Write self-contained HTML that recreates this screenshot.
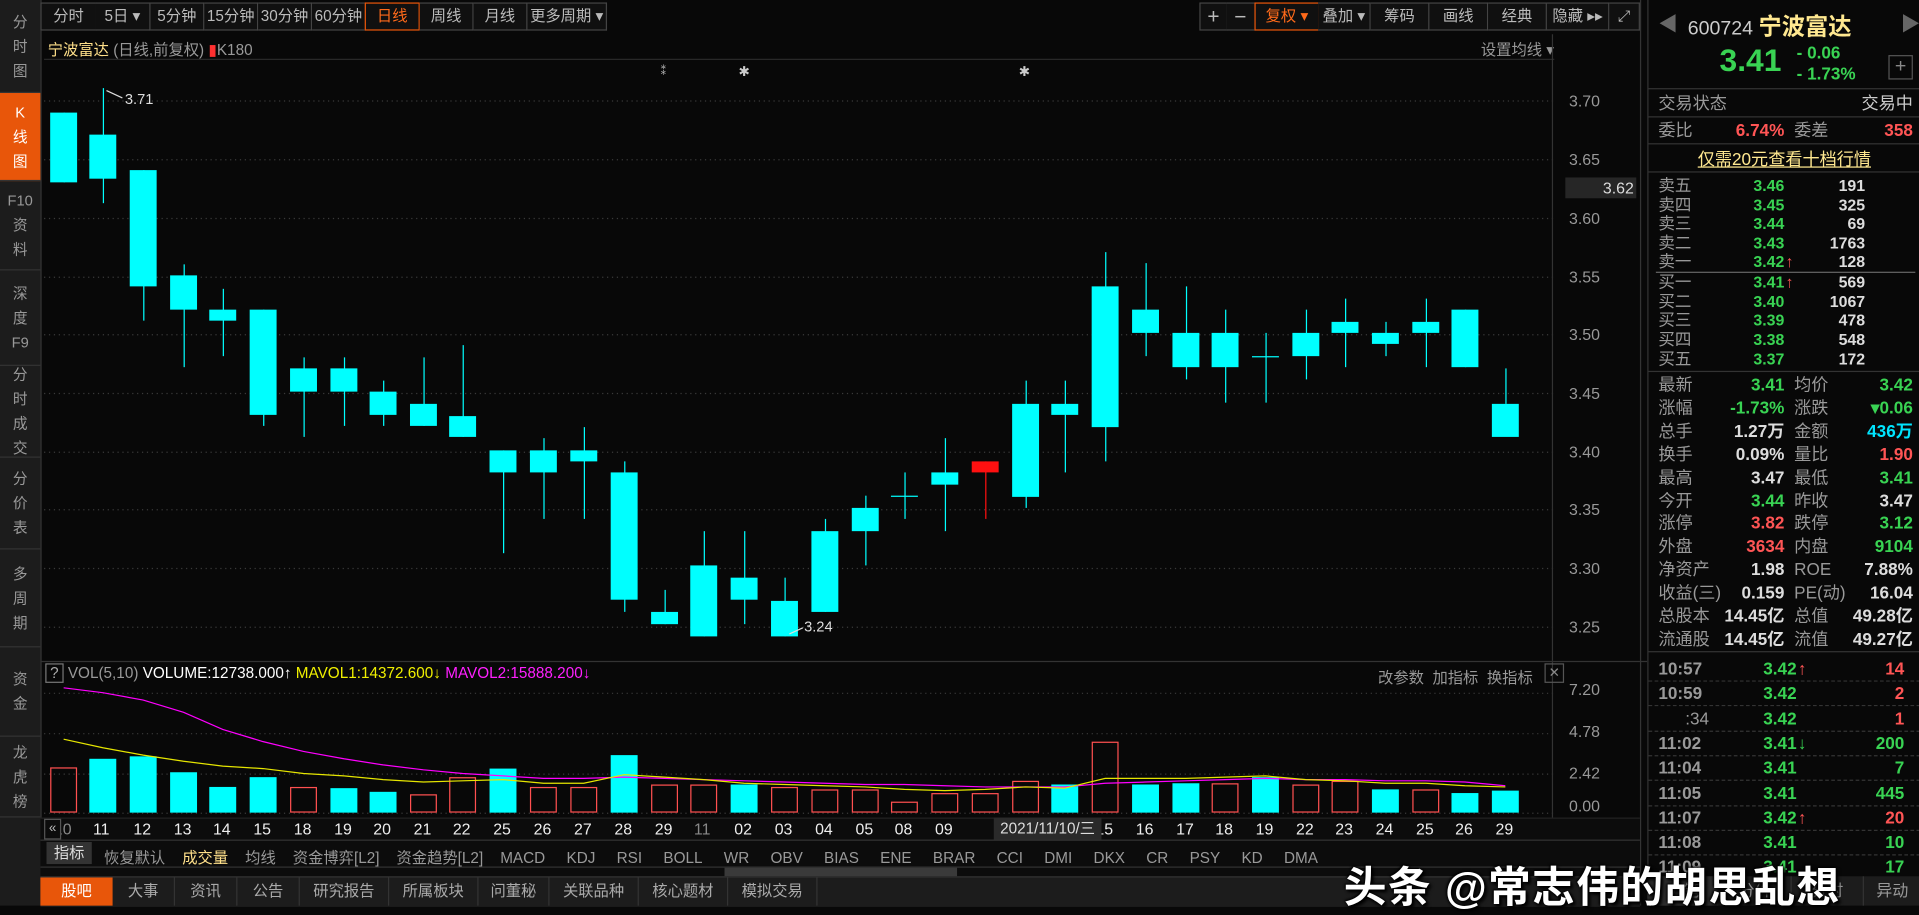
<!DOCTYPE html>
<html><head><meta charset="utf-8">
<style>
html,body{margin:0;padding:0;background:#080808;overflow:hidden;width:1919px;height:906px}
#w{position:absolute;left:0;top:0;width:1568px;height:740px;transform:scale(1.22385);transform-origin:0 0;background:#080808;font-family:"Liberation Sans","Noto Sans CJK SC",sans-serif;font-size:13px;color:#ccc}
.a{position:absolute;white-space:nowrap}
.side{position:absolute;left:0;top:0;width:33px;height:740px;background:#1c1c1c;border-right:1px solid #333}
.tab{position:absolute;left:0;width:33px;color:#999;text-align:center;font-size:12px;line-height:20px;border-bottom:1px solid #333;display:flex;flex-direction:column;justify-content:center}
.btn{position:absolute;top:2px;height:21px;line-height:21px;border:1px solid #444;border-left:none;color:#bbb;text-align:center;font-size:12.5px;background:#101010}
.g{color:#39d353}.r{color:#ff5555}.wt{color:#ddd}.gy{color:#999}
.rp{position:absolute;left:1346px;top:0;width:222px;height:740px;background:#080808;border-left:1px solid #333}
.sep{position:absolute;left:0;width:222px;height:1px;background:#333}
.row{position:absolute;left:0;width:222px;height:20px;font-size:14px;line-height:20px;font-weight:bold}
.row span{position:absolute}
.lb{left:8px;color:#999;font-weight:normal}
.v1{right:111px;text-align:right}
.l2{left:119px;color:#999;font-weight:normal}
.v2{right:6px;text-align:right}
</style></head><body><div id="w">

<div class="side">
<div class="tab" style="top:0;height:75px">分<br>时<br>图</div>
<div class="tab" style="top:76px;height:71px;background:#e8560a;color:#fff">K<br>线<br>图</div>
<div class="tab" style="top:148px;height:72px">F10<br>资<br>料</div>
<div class="tab" style="top:221px;height:77px">深<br>度<br>F9</div>
<div class="tab" style="top:299px;height:74px">分<br>时<br>成<br>交</div>
<div class="tab" style="top:374px;height:74px">分<br>价<br>表</div>
<div class="tab" style="top:449px;height:79px">多<br>周<br>期</div>
<div class="tab" style="top:529px;height:72px">资<br>金</div>
<div class="tab" style="top:602px;height:65px">龙<br>虎<br>榜</div>
</div>

<div class="btn" style="left:33px;width:44px;border-left:1px solid #444">分时</div>
<div class="btn" style="left:78px;width:44px">5日 ▾</div>
<div class="btn" style="left:123px;width:43px">5分钟</div>
<div class="btn" style="left:167px;width:43px">15分钟</div>
<div class="btn" style="left:211px;width:43px">30分钟</div>
<div class="btn" style="left:255px;width:43px">60分钟</div>
<div class="btn" style="left:298px;width:43px;border:1px solid #e8560a;color:#ff6a1a">日线</div>
<div class="btn" style="left:343px;width:43px">周线</div>
<div class="btn" style="left:387px;width:43px">月线</div>
<div class="btn" style="left:431px;width:64px">更多周期 ▾</div>

<div class="btn" style="left:980px;width:21px;border-left:1px solid #444;font-size:17px">+</div>
<div class="btn" style="left:1002px;width:23px;font-size:17px">−</div>
<div class="btn" style="left:1025px;width:51px;border:1px solid #e8560a;color:#ff6a1a">复权 ▾</div>
<div class="btn" style="left:1077px;width:42px">叠加 ▾</div>
<div class="btn" style="left:1120px;width:47px">筹码</div>
<div class="btn" style="left:1168px;width:47px">画线</div>
<div class="btn" style="left:1216px;width:47px">经典</div>
<div class="btn" style="left:1264px;width:50px">隐藏 ▸▸</div>
<div class="btn" style="left:1315px;width:24px">⤢</div>

<div class="a" style="left:39px;top:30px;font-size:12.5px"><span style="color:#ffe08a">宁波富达</span> <span class="gy">(日线,前复权)</span> <span style="color:#ff3030">▮</span><span class="gy">K180</span></div>
<div class="a gy" style="left:1210px;top:30px;font-size:12.5px">设置均线 ▾</div>
<div class="a" style="left:36px;top:48px;width:1234px;height:1px;background:#2a2a2a"></div>

<svg class="a" style="left:0;top:0" width="1346" height="740" id="sv">
<g stroke="#3a3a3a" stroke-dasharray="1,3">
<line x1="36" x2="1270" y1="82.5" y2="82.5"/><line x1="36" x2="1270" y1="130.5" y2="130.5"/><line x1="36" x2="1270" y1="178.5" y2="178.5"/><line x1="36" x2="1270" y1="226.5" y2="226.5"/><line x1="36" x2="1270" y1="273.5" y2="273.5"/><line x1="36" x2="1270" y1="321.5" y2="321.5"/><line x1="36" x2="1270" y1="369.5" y2="369.5"/><line x1="36" x2="1270" y1="416.5" y2="416.5"/><line x1="36" x2="1270" y1="464.5" y2="464.5"/><line x1="36" x2="1270" y1="512.5" y2="512.5"/>
<line x1="36" x2="1270" y1="566.5" y2="566.5"/><line x1="36" x2="1270" y1="599.5" y2="599.5"/><line x1="36" x2="1270" y1="632.5" y2="632.5"/><line x1="36" x2="1270" y1="664.5" y2="664.5"/>
</g>
<line x1="1268.5" x2="1268.5" y1="28" y2="668" stroke="#333"/>
<line x1="33" x2="1346" y1="540.5" y2="540.5" stroke="#333"/>
<line x1="1340.5" x2="1340.5" y1="0" y2="740" stroke="#333"/>
<g id="cd"></g><g id="vb"></g>
<polyline fill="none" stroke="#ff00ff" stroke-width="1" points="52,562 84,566 117,572 150,582 182,596 215,606 248,614 281,620 313,625 346,629 378,632 411,634 444,636 477,636 510,635 543,636 575,637 608,638 641,639 674,640 707,641 739,641 772,642 805,643 838,643 870,643 903,640 936,639 969,638 1001,637 1034,636 1067,637 1099,637 1132,638 1165,638 1197,639 1230,642"/>
<polyline fill="none" stroke="#e6e600" stroke-width="1" points="52,604 84,611 117,617 150,622 182,626 215,628 248,632 281,634 313,637 346,639 378,638 411,637 444,640 477,640 510,633 543,635 575,637 608,640 641,641 674,642 707,643 739,645 772,646 805,645 838,643 870,644 903,636 936,636 969,636 1001,635 1034,634 1067,637 1099,638 1132,640 1165,640 1197,642 1230,643"/>
<text x="542" y="61" fill="#ccc" font-size="10" text-anchor="middle">⁑</text>
<text x="608" y="62" fill="#ccc" font-size="11" text-anchor="middle">✱</text>
<text x="837" y="62" fill="#ccc" font-size="11" text-anchor="middle">✱</text>
<line x1="87" y1="74" x2="100" y2="80" stroke="#ddd"/>
<text x="102" y="85" fill="#ddd" font-size="12" font-family="Liberation Sans">3.71</text>
<line x1="645" y1="518" x2="656" y2="513" stroke="#ddd"/>
<text x="657" y="516" fill="#ddd" font-size="12" font-family="Liberation Sans">3.24</text>
</svg>

<div class="a gy" style="left:1282px;top:75px">3.70</div>
<div class="a gy" style="left:1282px;top:123px">3.65</div>
<div class="a" style="left:1279px;top:145px;width:58px;height:17px;background:#262626;color:#ddd;line-height:17px;text-align:right;padding-right:2px;box-sizing:border-box">3.62</div>
<div class="a gy" style="left:1282px;top:171px">3.60</div>
<div class="a gy" style="left:1282px;top:219px">3.55</div>
<div class="a gy" style="left:1282px;top:266px">3.50</div>
<div class="a gy" style="left:1282px;top:314px">3.45</div>
<div class="a gy" style="left:1282px;top:362px">3.40</div>
<div class="a gy" style="left:1282px;top:409px">3.35</div>
<div class="a gy" style="left:1282px;top:457px">3.30</div>
<div class="a gy" style="left:1282px;top:505px">3.25</div>
<div class="a gy" style="left:1282px;top:556px">7.20</div>
<div class="a gy" style="left:1282px;top:590px">4.78</div>
<div class="a gy" style="left:1282px;top:624px">2.42</div>
<div class="a gy" style="left:1282px;top:651px">0.00</div>

<div class="a" style="left:37px;top:543px;font-size:12.5px"><span style="border:1px solid #777;color:#aaa;padding:0 3px">?</span> <span class="gy">VOL(5,10)</span> <span style="color:#fff">VOLUME:12738.000↑</span> <span style="color:#f0f000">MAVOL1:14372.600↓</span> <span style="color:#ff20ff">MAVOL2:15888.200↓</span></div>
<div class="a gy" style="left:1126px;top:543px;font-size:12.5px">改参数 &nbsp;加指标 &nbsp;换指标</div>
<div class="a" style="left:1262px;top:542px;width:14px;height:14px;border:1px solid #555;color:#888;font-size:11px;line-height:14px;text-align:center">✕</div>

<div class="a" style="left:33px;top:668px;width:1307px;height:18px;background:#0c0c0c;border-top:1px solid #222"></div>
<div class="a" id="dates" style="top:670px;left:0;color:#eee;font-size:13px"></div>
<div class="a" style="left:36px;top:669px;width:12px;height:15px;border:1px solid #555;background:#0c0c0c;color:#bbb;font-size:11px;line-height:15px;text-align:center">«</div>
<div class="a" style="left:812px;top:668px;width:88px;height:18px;background:#2a2a2a;color:#ddd;line-height:18px;text-align:center;font-size:12.5px">2021/11/10/三</div>

<div class="a" style="left:33px;top:686px;width:1307px;height:22px;background:#0c0c0c;border-top:1px solid #333"></div>
<div class="a" style="left:38px;top:688px;width:37px;height:18px;background:#333;color:#ddd;text-align:center;line-height:18px;font-size:12.5px">指标</div>
<div class="a gy" style="left:85px;top:690px;font-size:12.5px"><span>恢复默认</span>&nbsp;&nbsp;&nbsp; <span style="color:#ffe08a">成交量</span>&nbsp;&nbsp;&nbsp; 均线&nbsp;&nbsp;&nbsp; 资金博弈[L2]&nbsp;&nbsp;&nbsp; 资金趋势[L2]&nbsp;&nbsp;&nbsp; MACD&nbsp;&nbsp;&nbsp;&nbsp; KDJ&nbsp;&nbsp;&nbsp;&nbsp; RSI&nbsp;&nbsp;&nbsp;&nbsp; BOLL&nbsp;&nbsp;&nbsp;&nbsp; WR&nbsp;&nbsp;&nbsp;&nbsp; OBV&nbsp;&nbsp;&nbsp;&nbsp; BIAS&nbsp;&nbsp;&nbsp;&nbsp; ENE&nbsp;&nbsp;&nbsp;&nbsp; BRAR&nbsp;&nbsp;&nbsp;&nbsp; CCI&nbsp;&nbsp;&nbsp;&nbsp; DMI&nbsp;&nbsp;&nbsp;&nbsp; DKX&nbsp;&nbsp;&nbsp;&nbsp; CR&nbsp;&nbsp;&nbsp;&nbsp; PSY&nbsp;&nbsp;&nbsp;&nbsp; KD&nbsp;&nbsp;&nbsp;&nbsp; DMA</div>
<div class="a" style="left:33px;top:708px;width:1307px;height:8px;background:#0c0c0c;border-top:1px solid #333"></div>
<div class="a" style="left:592px;top:709px;width:190px;height:7px;background:#3a3a3a"></div>

<div class="a" style="left:33px;top:716px;width:1307px;height:24px;background:#1c1c1c;border-top:1px solid #333"></div>
<div class="a" style="top:717px;left:33px;height:23px;line-height:23px;font-size:12.5px;color:#aaa;display:flex">
<div style="width:59px;text-align:center;background:#e8560a;color:#fff">股吧</div>
<div style="width:50px;text-align:center;border-right:1px solid #333">大事</div>
<div style="width:50px;text-align:center;border-right:1px solid #333">资讯</div>
<div style="width:50px;text-align:center;border-right:1px solid #333">公告</div>
<div style="width:72px;text-align:center;border-right:1px solid #333">研究报告</div>
<div style="width:72px;text-align:center;border-right:1px solid #333">所属板块</div>
<div style="width:57px;text-align:center;border-right:1px solid #333">问董秘</div>
<div style="width:72px;text-align:center;border-right:1px solid #333">关联品种</div>
<div style="width:72px;text-align:center;border-right:1px solid #333">核心题材</div>
<div style="width:72px;text-align:center;border-right:1px solid #333">模拟交易</div>
</div>

<div class="rp">
<div class="a" style="left:8px;top:6px;color:#666;font-size:16px">◀</div>
<div class="a" style="left:32px;top:7px;font-size:16px;color:#ccc">600724 <span style="color:#ffe890;font-size:19px;font-weight:bold">宁波富达</span></div>
<div class="a" style="left:206px;top:6px;color:#666;font-size:16px">▶</div>
<div class="a g" style="left:58px;top:34px;font-size:26px;font-weight:bold">3.41</div>
<div class="a g" style="left:121px;top:35px;font-size:14px;font-weight:bold;line-height:17px">- 0.06<br>- 1.73%</div>
<div class="a" style="left:196px;top:45px;width:18px;height:18px;border:1px solid #555;color:#888;text-align:center;line-height:18px;font-size:16px">+</div>
<div class="sep" style="top:72px"></div>
<div class="row" style="top:74px"><span class="lb">交易状态</span><span class="v2" style="color:#ccc;font-weight:normal">交易中</span></div>
<div class="sep" style="top:95px"></div>
<div class="row" style="top:96px"><span class="lb">委比</span><span class="v1 r">6.74%</span><span class="l2">委差</span><span class="v2 r">358</span></div>
<div class="sep" style="top:117px"></div>
<div class="a" style="left:0;width:222px;top:120px;text-align:center;color:#ffe890;text-decoration:underline;font-size:14px">仅需20元查看十档行情</div>
<div class="sep" style="top:140px"></div>
<div id="ob"></div>
<div class="a" style="left:6px;top:222px;width:212px;height:1px;background:#666"></div>
<div class="sep" style="top:303px"></div>
<div id="st"></div>
<div class="sep" style="top:532px"></div>
<div id="tk"></div>
<div class="a" style="left:0;top:716px;width:222px;height:24px;background:#1c1c1c;display:flex;font-size:13px;color:#999;line-height:24px">
<div style="width:58px;text-align:center;background:#2e2e2e;color:#bbb">分笔</div><div style="width:59px;text-align:center;border-right:1px solid #333">分价</div><div style="width:59px;text-align:center;border-right:1px solid #333">分时</div><div style="width:46px;text-align:center">异动</div>
</div>
</div>

<div class="a" style="left:1098px;top:697px;font-size:35px;letter-spacing:1px;color:#fff;font-weight:bold;text-shadow:1px 1px 2px #000,-1px -1px 2px #000,2px 2px 3px #000">头条 @常志伟的胡思乱想</div>
</div>

<script>
var ns="http://www.w3.org/2000/svg";
function el(t,a,p){var e=document.createElementNS(ns,t);for(var k in a)e.setAttribute(k,a[k]);p.appendChild(e);}
var cd=document.getElementById('cd'),vb=document.getElementById('vb');
var C=[[52,92,149,92,149],[84,110,146,72,166],[117,139,234,139,262],[150,225,253,216,300],[182,253,262,236,291],[215,253,339,253,348],[248,301,320,292,357],[281,301,320,292,348],[313,320,339,311,348],[346,330,348,292,348],[378,340,357,282,357],[411,368,386,368,452],[444,368,386,358,424],[477,368,377,349,424],[510,386,490,377,500],[543,500,510,482,510],[575,462,520,434,520],[608,472,490,434,510],[641,491,520,472,520],[674,434,500,424,500],[707,415,434,405,462],[739,405,406,386,424],[772,386,396,358,434],[805,377,386,377,424,1],[838,330,406,311,415],[870,330,339,311,386],[903,234,349,206,377],[936,253,272,215,291],[969,272,300,234,310],[1001,272,300,253,329],[1034,291,292,272,329],[1067,272,291,253,310],[1099,263,272,244,300],[1132,272,281,263,291],[1165,263,272,244,300],[1197,253,300,253,300],[1230,330,357,301,330]];
C.forEach(function(c){var col=c[5]?'#ff1010':'#00ffff';el('line',{x1:c[0]+.5,x2:c[0]+.5,y1:c[3],y2:c[4],stroke:col},cd);el('rect',{x:c[0]-11,y:c[1],width:22,height:Math.max(1,c[2]-c[1]),fill:col},cd);});
var V=[[627,1],[620],[618],[631],[643],[635],[643,1],[644],[647],[649,1],[635,1],[628],[643,1],[643,1],[617],[641,1],[641,1],[641],[643,1],[645,1],[645,1],[655,1],[648,1],[648,1],[638,1],[641],[606,1],[641],[640],[640,1],[635],[641,1],[638,1],[645],[645,1],[648],[646]];
V.forEach(function(v,i){var x=C[i][0];if(v[1])el('rect',{x:x-10.5,y:v[0]+.5,width:21,height:663-v[0],fill:'none',stroke:'#ff5050'},vb);else el('rect',{x:x-11,y:v[0],width:22,height:664-v[0],fill:'#00ffff'},vb);});
var D=['10','11','12','13','14','15','18','19','20','21','22','25','26','27','28','29','11','02','03','04','05','08','09','','','','15','16','17','18','19','22','23','24','25','26','29'];
var h='';D.forEach(function(d,i){if(d)h+='<span style="position:absolute;left:'+(C[i][0]-8)+'px;color:'+((i==0||i==16)?'#888':'#eee')+'">'+d+'</span>';});
document.getElementById('dates').innerHTML=h;
var ob=[['卖五','3.46','191'],['卖四','3.45','325'],['卖三','3.44','69'],['卖二','3.43','1763'],['卖一','3.42','128',1],['买一','3.41','569',1],['买二','3.40','1067'],['买三','3.39','478'],['买四','3.38','548'],['买五','3.37','172']];
h='';ob.forEach(function(o,i){var y=(i<5?144+i*15.5:223+(i-5)*15.7);h+='<div class="row" style="top:'+y+'px;height:16px;line-height:16px;font-size:13px"><span class="lb" style="font-size:13.5px">'+o[0]+'</span><span class="g" style="right:111px">'+o[1]+'</span>'+(o[3]?'<span class="r" style="left:112px">↑</span>':'')+'<span class="wt" style="right:45px">'+o[2]+'</span></div>';});
document.getElementById('ob').innerHTML=h;
var st=[['最新','3.41','g','均价','3.42','g'],['涨幅','-1.73%','g','涨跌','▾0.06','g'],['总手','1.27万','wt','金额','436万','c'],['换手','0.09%','wt','量比','1.90','r'],['最高','3.47','wt','最低','3.41','g'],['今开','3.44','g','昨收','3.47','wt'],['涨停','3.82','r','跌停','3.12','g'],['外盘','3634','r','内盘','9104','g'],['净资产','1.98','wt','ROE','7.88%','wt'],['收益(三)','0.159','wt','PE(动)','16.04','wt'],['总股本','14.45亿','wt','总值','49.28亿','wt'],['流通股','14.45亿','wt','流值','49.27亿','wt']];
h='';st.forEach(function(s,i){var y=304+i*18.9;h+='<div class="row" style="top:'+y+'px"><span class="lb">'+s[0]+'</span><span class="v1 '+s[2]+'"'+(s[2]=='c'?' style="color:#00e5ff"':'')+'>'+s[1]+'</span><span class="l2">'+s[3]+'</span><span class="v2 '+s[5]+'"'+(s[5]=='c'?' style="color:#00e5ff"':'')+'>'+s[4]+'</span></div>';});
document.getElementById('st').innerHTML=h;
var tk=[['10:57','3.42','14','r','↑'],['10:59','3.42','2','r',''],[':34','3.42','1','r',''],['11:02','3.41','200','g','↓'],['11:04','3.41','7','g',''],['11:05','3.41','445','g',''],['11:07','3.42','20','r','↑'],['11:08','3.41','10','g',''],['11:09','3.41','17','g','']];
h='';tk.forEach(function(t,i){var y=536+i*20.3;h+='<div class="row" style="top:'+y+'px;border-bottom:1px dashed #333"><span class="gy" style="left:'+(t[0].length<4?'30':'8')+'px;'+(t[0].length<4?'font-weight:normal':'')+'">'+t[0]+'</span><span class="g" style="right:101px">'+t[1]+'</span>'+(t[4]?'<span class="'+(t[4]=='↑'?'r':'g')+'" style="left:122px">'+t[4]+'</span>':'')+'<span class="'+t[3]+'" style="right:13px">'+t[2]+'</span></div>';});
document.getElementById('tk').innerHTML=h;
</script>
</body></html>
